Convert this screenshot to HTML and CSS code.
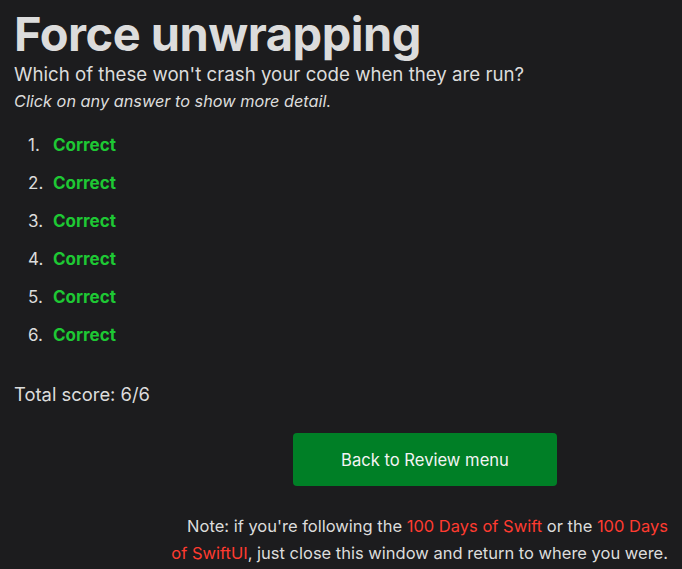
FILE: index.html
```html
<!DOCTYPE html>
<html>
<head>
<meta charset="utf-8">
<link rel="stylesheet" href="styles.css">
</head>
<body>
<main class="page">
  <h1 class="title">Force unwrapping</h1>
  <p class="question">Which of these won't crash your code when they are run?</p>
  <p class="hint">Click on any answer to show more detail.</p>
  <ol class="answers">
    <li><span class="correct">Correct</span></li>
    <li><span class="correct">Correct</span></li>
    <li><span class="correct">Correct</span></li>
    <li><span class="correct">Correct</span></li>
    <li><span class="correct">Correct</span></li>
    <li><span class="correct">Correct</span></li>
  </ol>
  <p class="score">Total score: 6/6</p>
  <div class="actions">
    <a class="back-btn" href="#">Back to Review menu</a>
  </div>
  <p class="note">Note: if you're following the <a href="#">100 Days of Swift</a> or the <a href="#">100 Days of SwiftUI</a>, just close this window and return to where you were.</p>
</main>
</body>
</html>
```
FILE: styles.css
```css
html, body {
  margin: 0;
  padding: 0;
  background: #1c1c1e;
}
body {
  font-family: Inter, "Noto Sans", sans-serif;
  color: #dcdcdc;
}
.page {
  padding: 0 14px;
}
.title {
  margin: 0;
  padding-top: 6px;
  font-size: 47px;
  font-weight: 700;
  line-height: 56px;
  letter-spacing: -0.5px;
  color: #dcdcdc;
}
.question {
  margin: 0;
  font-size: 18.7px;
  line-height: 26px;
}
.hint {
  margin: 0;
  font-size: 16.3px;
  font-style: italic;
  line-height: 26px;
}
.answers {
  list-style: none;
  counter-reset: answer;
  margin: 20px 0 0 0;
  padding-left: 14px;
  font-size: 17px;
}
.answers li {
  counter-increment: answer;
  display: flex;
  line-height: 22px;
  margin-bottom: 16px;
}
.answers li::before {
  content: counter(answer) ".";
  width: 25px;
  flex: none;
  color: #dcdcdc;
}
.correct {
  color: #1ec834;
  font-weight: 700;
}
.score {
  margin: 35px 0 0 0;
  font-size: 18.4px;
  line-height: 26px;
}
.actions {
  display: flex;
  justify-content: center;
  margin-top: 26px;
  padding-left: 168px;
}
.back-btn {
  display: flex;
  align-items: center;
  justify-content: center;
  width: 264px;
  height: 53px;
  background: #007f26;
  border-radius: 4px;
  color: #f4f4f4;
  font-size: 16.6px;
  text-decoration: none;
}
.note {
  margin: 27px 0 0 auto;
  max-width: 500px;
  text-align: right;
  font-size: 16.5px;
  line-height: 27px;
}
.note a {
  color: #ff3b30;
  text-decoration: none;
}
```
